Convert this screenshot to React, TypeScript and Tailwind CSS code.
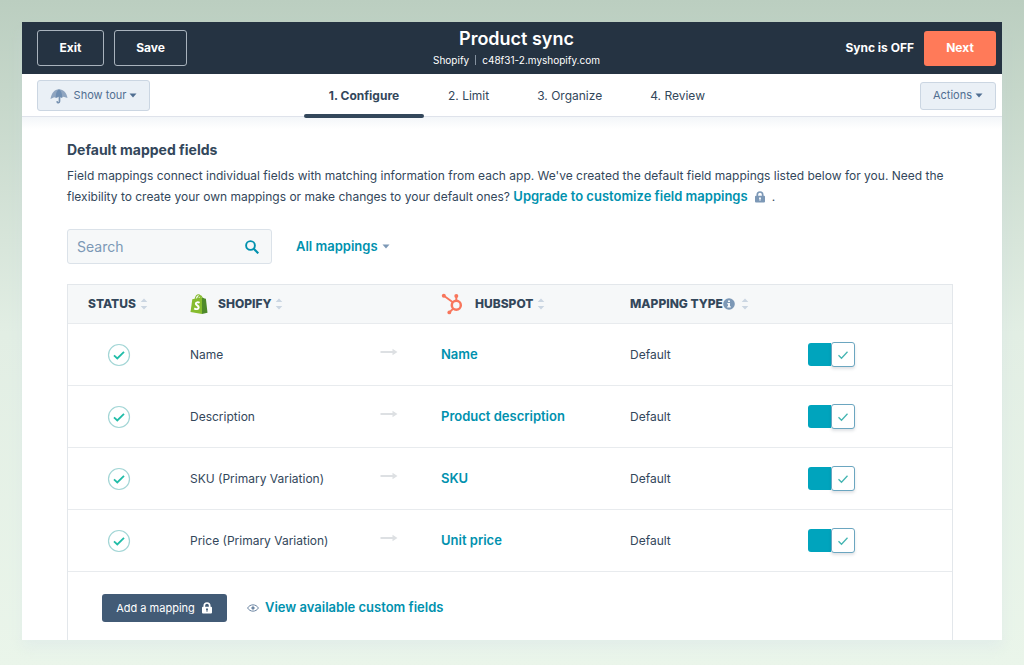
import type { ReactNode } from "react";

type Mapping = { source: string; target: string; type: string };

const mappings: Mapping[] = [
  { source: "Name", target: "Name", type: "Default" },
  { source: "Description", target: "Product description", type: "Default" },
  { source: "SKU (Primary Variation)", target: "SKU", type: "Default" },
  { source: "Price (Primary Variation)", target: "Unit price", type: "Default" },
];

const steps = ["2. Limit", "3. Organize", "4. Review"];

function Caret({ className = "" }: { className?: string }) {
  return (
    <svg viewBox="0 0 8 5" className={`h-[5px] w-2 shrink-0 ${className}`} fill="currentColor" aria-hidden="true">
      <path d="M0.500 0.500h7L4 4.500z" />
    </svg>
  );
}

function Umbrella() {
  return (
    <svg viewBox="0 0 18 16" className="h-4 w-[18px] shrink-0" aria-hidden="true">
      <path d="M0.500 11C1.500 5 4.500 1.200 9 1.200S16.800 5 17.500 10L13.500 8.800 11.500 10 9 8.800 6.500 10 4.200 9.200z" fill="#8fa5c0" />
      <path d="M9 1.200C6.500 3 5.500 6 5.800 9.500L9 8.500l3 1c.4-3.500-.6-6.500-3-8.300z" fill="#6f8eb2" />
      <path d="M9.500 8.500v4.800c0 1.700-2 1.900-2.300.6" fill="none" stroke="#7691b0" strokeWidth="1.700" strokeLinecap="round" />
    </svg>
  );
}

function Lock({ className = "" }: { className?: string }) {
  return (
    <svg viewBox="0 0 12 12" className={`h-3 w-3 shrink-0 ${className}`} aria-hidden="true">
      <path d="M3.300 6V3.700a2.700 2.700 0 0 1 5.400 0V6" fill="none" stroke="currentColor" strokeWidth="1.700" />
      <path fillRule="evenodd" fill="currentColor" d="M2 4.800h8a1 1 0 0 1 1 1v4.700a1 1 0 0 1-1 1H2a1 1 0 0 1-1-1V5.800a1 1 0 0 1 1-1zM6 6.300a1 1 0 0 0-.5 1.850V9.700h1V8.150A1 1 0 0 0 6 6.300z" />
    </svg>
  );
}

function Sort() {
  return (
    <svg viewBox="0 0 8 12" className="h-3 w-2 shrink-0" fill="#cbd6e2" aria-hidden="true">
      <path d="M4 0.500L7.300 4H0.700zM4 11.500L0.700 8h6.600z" />
    </svg>
  );
}

function ShopifyMark() {
  return (
    <svg viewBox="0 0 18 20" className="h-5 w-[18px] shrink-0" aria-hidden="true">
      <path d="M2.300 5.200L12 3.200V20L0.500 17.900z" fill="#86bc2f" />
      <path d="M12 3.200l2.600 1.400 1.300.2L17.500 18.700 12 20z" fill="#4f8a2b" />
      <path d="M5 5.500C5.500 2.800 7 .8 8.600.8c1.200 0 1.900 1.300 1.900 3.400M7.600 5C7.800 3 9.300 1.500 10.600 1.700c.9.200 1.300 1 1.400 2" fill="none" stroke="#86bc2f" strokeWidth="1.100" />
      <path d="M9.600 8.800c-1.500-.9-3.800-.6-3.800.9 0 1.700 3 1.700 2.900 3.700-.1 1.800-2.500 2.300-4.500 1" fill="none" stroke="#fff" strokeWidth="1.900" />
    </svg>
  );
}

function HubspotMark() {
  return (
    <svg viewBox="0 0 22 22" className="h-[22px] w-[22px] shrink-0" fill="none" stroke="#f8765c" aria-hidden="true">
      <circle cx="15.300" cy="12.300" r="4.500" strokeWidth="2.500" />
      <path d="M15.300 8V3.500M11.800 9.300L3.200 3M12.200 15.600L8.500 19.200" strokeWidth="1.900" />
      <circle cx="2.800" cy="2.700" r="2" fill="#f8765c" stroke="none" />
      <circle cx="15.300" cy="3" r="2" fill="#f8765c" stroke="none" />
      <circle cx="8.300" cy="19.400" r="1.900" fill="#f8765c" stroke="none" />
    </svg>
  );
}

function InfoIcon() {
  return (
    <svg viewBox="0 0 12 12" className="h-3 w-3 shrink-0" aria-hidden="true">
      <circle cx="6" cy="6" r="5.800" fill="#7c98b6" />
      <path d="M5 2.500h2V4H5zM4.300 5H7v3.300h.8v1.200H4.200V8.300H5V6.200h-.7z" fill="#f5f8fa" />
    </svg>
  );
}

function StatusCheck() {
  return (
    <svg viewBox="0 0 24 24" className="block h-6 w-6" fill="none" role="img" aria-label="Active">
      <circle cx="12" cy="12" r="10.500" stroke="#a3d6d6" strokeWidth="1.200" />
      <path d="M7 12.300l3.300 3.200L17 8.800" stroke="#21bda8" strokeWidth="1.800" />
    </svg>
  );
}

function Arrow() {
  return (
    <svg viewBox="0 0 18 8" className="block h-2 w-[18px]" aria-hidden="true">
      <path d="M0.500 3h12V0.800L17.500 4l-5 3.200V5h-12z" fill="#dde0e3" />
    </svg>
  );
}

function Eye() {
  return (
    <svg viewBox="0 0 12 8" className="h-2 w-3 shrink-0" fill="none" stroke="#6c86a3" aria-hidden="true">
      <path d="M0.600 4C3 -0.200 9 -0.200 11.400 4 9 8.200 3 8.200 0.600 4z" />
      <circle cx="6" cy="4" r="1.200" fill="#6c86a3" />
    </svg>
  );
}

function Toggle({ label }: { label: string }) {
  return (
    <label className="relative flex h-[25px] w-[47px] cursor-pointer">
      <input type="checkbox" defaultChecked aria-label={label} className="peer sr-only" />
      <span className="my-px flex-1 rounded-l-[3px] bg-[#cbd6e2] peer-checked:bg-[#00a4bd]" />
      <span className="flex w-6 items-center justify-center rounded-[3px] border border-[#6ba6c0] bg-white shadow-[0_2px_3px_rgba(45,62,80,0.15)]">
        <svg viewBox="0 0 12 10" className="h-2.5 w-3" fill="none" stroke="#45b5b2" strokeWidth="1.300" aria-hidden="true">
          <path d="M1.500 5.200l3 3L10.500 1.800" />
        </svg>
      </span>
    </label>
  );
}

function HeadCell({ children, label }: { children?: ReactNode; label?: string }) {
  return (
    <th scope="col" aria-label={label} className="h-[39px] border-b border-[#e8ebee] p-0 text-left align-middle font-extrabold">
      <div className="flex items-center">{children}</div>
    </th>
  );
}

export default function App() {
  return (
    <div className="min-h-screen bg-linear-to-b from-[#bbcec0] via-[#e2eee4] via-50% to-[#eaf5ea] p-[22px] pb-[26px] font-['Inter',sans-serif] text-[12px] text-[#33475b]">
      <div className="bg-white shadow-[0_8px_12px_rgba(200,215,235,0.2)]">
        <header className="grid grid-cols-[1fr_auto_1fr] items-center bg-[#253342] pr-[6px] pl-[15px] text-white">
          <div className="flex h-[52px] items-center gap-2.5">
            <button className="h-9 w-[67px] rounded-[3px] border border-[#a9b3bd] font-bold">Exit</button>
            <button className="h-9 w-[73px] rounded-[3px] border border-[#a9b3bd] font-bold">Save</button>
          </div>
          <div className="text-center">
            <h1 className="text-[18px] leading-6 font-semibold">Product sync</h1>
            <p className="flex items-center justify-center gap-1.5 text-[10px] leading-[18px]">
              <span>Shopify</span>
              <span className="h-2.5 w-px bg-[#8592a0]" />
              <span>c48f31-2.myshopify.com</span>
            </p>
          </div>
          <div className="flex items-center justify-end gap-2.5">
            <span className="font-bold">Sync is OFF</span>
            <button className="h-[35px] w-[72px] rounded-[3px] bg-[#ff7a59] font-bold">Next</button>
          </div>
        </header>

        <div className="grid h-[43px] grid-cols-[1fr_auto_1fr] items-center border-b border-[#dfe3eb] pr-[6px] pl-[15px]">
          <div className="flex">
            <button className="flex h-[31px] w-[113px] items-center justify-center rounded-[3px] border border-[#cbd6e2] bg-[#eaf0f6] text-[11px] text-[#506e91]">
              <Umbrella />
              <span className="ml-1.5">Show tour</span>
              <Caret className="ml-[3px]" />
            </button>
          </div>
          <nav className="flex h-[43px] self-start">
            <a href="#configure" aria-current="step" className="relative flex w-[120px] items-center justify-center font-bold">
              1. Configure
              <span className="absolute inset-x-0 -bottom-px h-1 rounded-full bg-[#33475b]" />
            </a>
            {steps.map((step) => (
              <a key={step} href="#step" className="flex items-center px-6">
                {step}
              </a>
            ))}
          </nav>
          <div className="flex justify-end">
            <button className="flex h-7 w-[76px] items-center justify-center gap-[3px] rounded-[3px] border border-[#cbd6e2] bg-[#eaf0f6] text-[11px] text-[#506e91]">
              Actions
              <Caret />
            </button>
          </div>
        </div>

        <main className="bg-linear-to-b from-[#f3f6f9] via-white via-[12px] to-white pt-[21px] pr-[49px] pl-[45px]">
          <h2 className="text-[14px] leading-6 font-bold">Default mapped fields</h2>
          <p className="mt-[3px] leading-[21px]">
            Field mappings connect individual fields with matching information from each app. We've created the default field mappings listed below for you. Need the flexibility to create your own mappings or make changes to your default ones?{" "}
            <a href="#upgrade" className="text-[13px] font-semibold text-[#0091ae]">
              Upgrade to customize field mappings
              <Lock className="mx-1.5 inline-block text-[#7c98b6]" />
            </a>
            .
          </p>

          <div className="mt-[22px] flex items-center">
            <label className="flex h-[35px] w-[205px] items-center rounded-[3px] border border-[#dbe2e9] bg-[#f6f8f9] pr-3 pl-[9px]">
              <input type="text" aria-label="Search" placeholder="Search" className="min-w-0 flex-1 bg-transparent text-[14px] outline-none placeholder:text-[#7c98b6]" />
              <svg viewBox="0 0 14 14" className="h-3.5 w-3.5 shrink-0" fill="none" stroke="#0091ae" aria-hidden="true">
                <circle cx="5.500" cy="5.500" r="4.400" strokeWidth="1.900" />
                <path d="M8.700 8.700L13.300 13.300" strokeWidth="2.200" />
              </svg>
            </label>
            <button className="ml-6 flex items-center gap-1 text-[13px] font-semibold text-[#0091ae]">
              All mappings
              <Caret className="text-[#7c98b6]" />
            </button>
          </div>

          <div className="mt-5 border border-b-0 border-[#e3e7eb]">
            <table className="w-full table-fixed border-separate border-spacing-0">
              <colgroup>
                <col className="w-[122px]" />
                <col className="w-[190px]" />
                <col className="w-[61px]" />
                <col className="w-[189px]" />
                <col className="w-[178px]" />
                <col />
              </colgroup>
              <thead className="bg-[#f6f8f9]">
                <tr>
                  <HeadCell>
                    <span className="mr-1 ml-5">STATUS</span>
                    <Sort />
                  </HeadCell>
                  <HeadCell>
                    <ShopifyMark />
                    <span className="mr-1 ml-2.5">SHOPIFY</span>
                    <Sort />
                  </HeadCell>
                  <HeadCell label="Direction" />
                  <HeadCell>
                    <HubspotMark />
                    <span className="mr-1 ml-3">HUBSPOT</span>
                    <Sort />
                  </HeadCell>
                  <HeadCell>
                    <span>MAPPING TYPE</span>
                    <InfoIcon />
                    <span className="ml-1.5 flex"><Sort /></span>
                  </HeadCell>
                  <HeadCell label="Enabled" />
                </tr>
              </thead>
              <tbody>
                {mappings.map((row) => (
                  <tr key={row.source} className="[&>td]:h-[62px] [&>td]:border-b [&>td]:border-[#e8ebee] [&>td]:p-0">
                    <td>
                      <div className="pl-[39px]"><StatusCheck /></div>
                    </td>
                    <td>{row.source}</td>
                    <td><div className="pb-1.5"><Arrow /></div></td>
                    <td>
                      <a href="#field" className="text-[13px] font-semibold text-[#0091ae]">{row.target}</a>
                    </td>
                    <td>{row.type}</td>
                    <td><Toggle label={`Sync ${row.source}`} /></td>
                  </tr>
                ))}
              </tbody>
            </table>
            <div className="flex items-center gap-5 pt-[22px] pb-[18px] pl-[34px]">
              <button className="flex h-7 w-[125px] items-center justify-center gap-1.5 rounded-[3px] bg-[#425b76] text-[11px] text-white">
                Add a mapping
                <Lock />
              </button>
              <a href="#custom-fields" className="flex items-center gap-1.5 text-[13px] font-semibold text-[#0091ae]">
                <Eye />
                View available custom fields
              </a>
            </div>
          </div>
        </main>
      </div>
    </div>
  );
}
